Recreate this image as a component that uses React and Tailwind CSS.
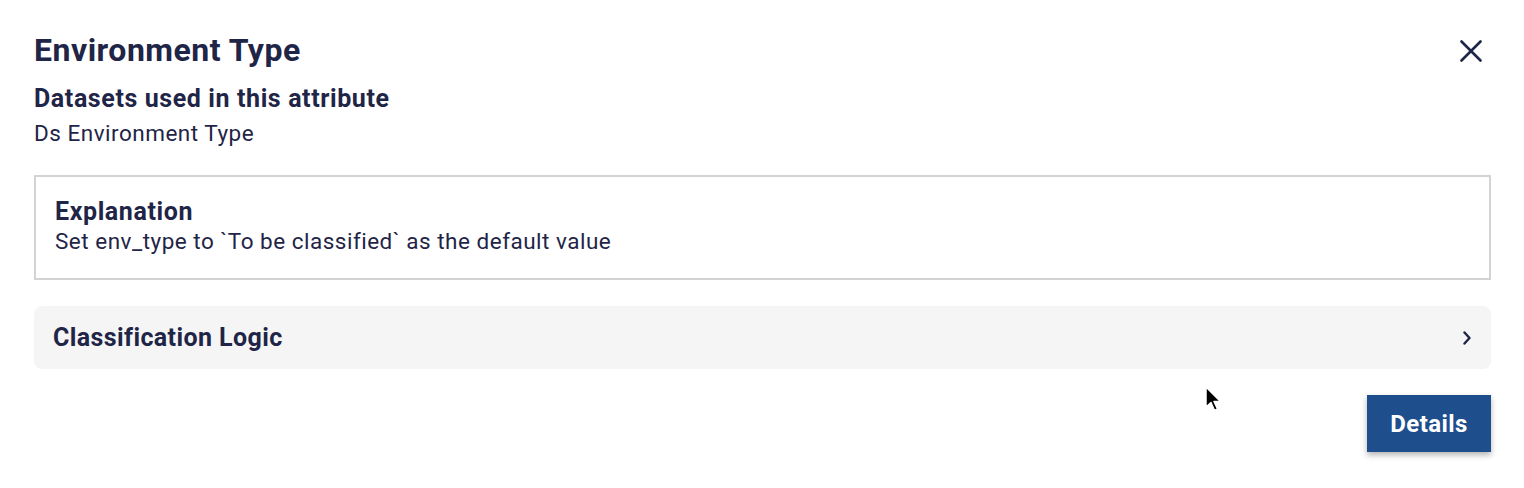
import React from 'react';

const font = { fontFamily: 'Roboto, "Liberation Sans", sans-serif' };

const App = () => {
  return (
    <div className="relative w-[1524px] h-[488px] bg-white text-[#1f2547]" style={font}>
      <div className="pl-[34px] pr-[33px] pt-[31px]">
        <div className="flex items-start justify-between">
          <h1 className="text-[32px] leading-[38px] font-bold tracking-[0.5px]">Environment Type</h1>
          <button className="mt-[9px] mr-[9px]">
            <svg width="22" height="22" viewBox="0 0 22 22">
              <path d="M1.5 1.5 L20.5 20.5 M20.5 1.5 L1.5 20.5" stroke="#1f2547" strokeWidth="2.6" strokeLinecap="round" />
            </svg>
          </button>
        </div>
        <h2 className="mt-[15px] text-[25px] leading-[30px] font-bold tracking-[0.6px]">Datasets used in this attribute</h2>
        <p className="mt-[5px] text-[22.5px] leading-[28px] tracking-[0.5px]">Ds Environment Type</p>

        <div className="mt-[28px] border-2 border-[#d3d3d3] px-[19px] pt-[20px] pb-[23px]">
          <h3 className="text-[25px] leading-[30px] font-bold tracking-[0.6px]">Explanation</h3>
          <p className="text-[22.5px] leading-[28px] tracking-[0.5px]">Set env_type to `To be classified` as the default value</p>
        </div>

        <div className="mt-[26px] flex h-[63px] items-center justify-between rounded-[8px] bg-[#f5f5f6] pl-[19px] pr-[20px]">
          <span className="text-[25px] font-bold tracking-[0.4px]">Classification Logic</span>
          <svg width="8" height="14" viewBox="0 0 8 14">
            <path d="M1.5 1.5 L6.5 7 L1.5 12.5" fill="none" stroke="#1f2547" strokeWidth="2.4" strokeLinecap="round" strokeLinejoin="round" />
          </svg>
        </div>

        <div className="mt-[26px] flex justify-end">
          <button className="h-[57px] w-[124px] bg-[#1f4e8c] text-[24px] font-bold tracking-[0.4px] text-white shadow-[0_3px_6px_rgba(0,0,0,0.3)]">Details</button>
        </div>
      </div>

      <svg className="absolute left-[1205px] top-[386px]" width="18" height="28" viewBox="0 0 18 28">
        <path d="M1 1 L1 21 L6 16.5 L9.5 24.5 L12.5 23 L9 15.5 L15.5 15.5 Z" fill="#000" stroke="#fff" strokeWidth="1.5" strokeLinejoin="round" />
      </svg>
    </div>
  );
};

export default App;
